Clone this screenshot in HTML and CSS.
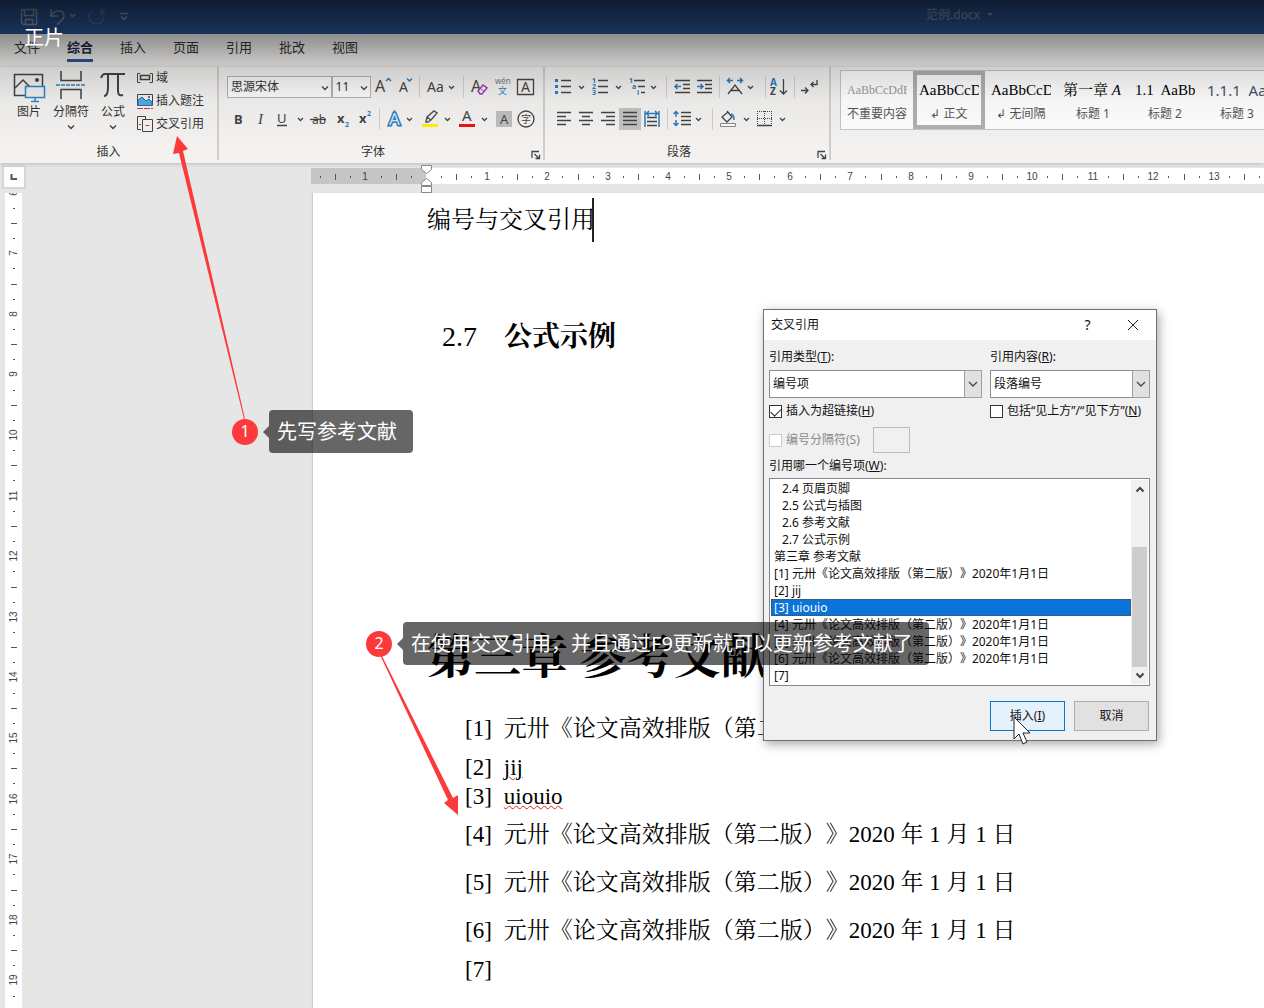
FILE: index.html
```
<!DOCTYPE html>
<html lang="zh-CN">
<head>
    <meta charset="UTF-8">
    <meta name="viewport" content="width=device-width, initial-scale=1.0">
    <title>范例.docx</title>
    <link rel="stylesheet" href="styles.css">
</head>
<body>
    <!-- 标题栏 -->
    <header class="titlebar">
        <div class="quick-access">
            <button type="button" aria-label="保存">
                <svg width="18" height="18" fill="none" stroke="currentColor" stroke-width="1.500"><path d="M1.500 1.500h15v15h-13l-2-2zM4.500 1.500v6h9v-6M5.500 16.500v-5h7v5"/></svg>
            </button>
            <button type="button" aria-label="撤销">
                <svg width="28" height="18" fill="none" stroke="currentColor" stroke-width="1.500"><path d="M2 1v7h7M2.500 7.500C6 1 15 2 15 8c0 3-4 6-7 8.500"/><path d="M21 6l2.500 2.500L26 6"/></svg>
            </button>
            <button type="button" aria-label="重复">
                <svg class="faint" width="20" height="18" fill="none" stroke="currentColor" stroke-width="1.500"><path d="M4 2.500a7.500 7.500 0 1 0 9 0M13 7V2h5"/></svg>
            </button>
            <button type="button" aria-label="自定义快速访问工具栏">
                <svg width="10" height="18" fill="none" stroke="currentColor" stroke-width="1.500"><path d="M1 5.500h8M2 8.500l3 3 3-3"/></svg>
            </button>
        </div>
        <button type="button" class="doc-title">范例.docx
            <svg width="8" height="6"><path d="M1 1h6L4 4z" fill="currentColor"/></svg>
        </button>
    </header>

    <!-- 选项卡 -->
    <nav class="tabs">
        <a href="#">文件</a>
        <a href="#" class="active">综合</a>
        <a href="#">插入</a>
        <a href="#">页面</a>
        <a href="#">引用</a>
        <a href="#">批改</a>
        <a href="#">视图</a>
    </nav>

    <!-- 功能区 -->
    <section class="ribbon">
        <div class="group insert-group">
            <div class="group-body">
                <button type="button" class="big-btn">
                    <svg width="34" height="32" fill="none" stroke="#444"><path d="M21 24.500H2.500v-21h28V15M3 17l8-8 10 10" stroke-width="1.500"/><circle cx="25" cy="9" r="2" fill="#444" stroke="none"/><path d="M13.500 15.500h19v11h-19zM23 27v3M19 30.500h8" fill="#f3f2f1" stroke="#2b88c8" stroke-width="1.500"/></svg>
                    图片
                </button>
                <button type="button" class="big-btn">
                    <svg width="30" height="32" fill="none" stroke="#444" stroke-width="1.500"><path d="M5 0v9.500h20V0M5 28V18.500h20V28"/><path d="M0 14h30" stroke="#2b88c8" stroke-dasharray="4 1"/></svg>
                    分隔符
                    <svg width="8" height="6" fill="none" stroke="#444" stroke-width="1.500"><path d="M1 1.500l3 3 3-3"/></svg>
                </button>
                <button type="button" class="big-btn">
                    <svg width="26" height="32" fill="none" stroke="#444" stroke-width="2"><path d="M1 7c1-3 2-4 4-4h20M8 3v13c0 5-1 9-4 9M18 3v17c0 4 2 5 5 4"/></svg>
                    公式
                    <svg width="8" height="6" fill="none" stroke="#444" stroke-width="1.500"><path d="M1 1.500l3 3 3-3"/></svg>
                </button>
                <div class="small-list">
                    <button type="button">
                        <svg width="17" height="18" fill="none" stroke="#444"><path d="M3 4.500H.5v9h3M13 4.500h2.500v9h-3"/><path d="M3.500 6.500h9v4h-9z" stroke-width="1.500"/></svg>域
                    </button>
                    <button type="button">
                        <svg width="17" height="18" fill="none" stroke="#444"><path d="M.5 2.500h15v11H.5z"/><path d="M1 8l4-3 4 4 3-2 3 3v3.500H1z" fill="#5aa9e0" stroke="#1f6fb5"/><circle cx="12" cy="5" r="1" fill="#444" stroke="none"/><path d="M0 16.500h16" stroke="#d13438" stroke-dasharray="6 1"/></svg>插入题注
                    </button>
                    <button type="button">
                        <svg width="17" height="18" fill="none" stroke="#444"><path d="M4 14.500H.5V1.500h8V4M5.500 4.500h10v12h-10z"/><path d="M2 9.500h2M8.500 10.500h4" stroke="#d13438"/></svg>交叉引用
                    </button>
                </div>
            </div>
            <div class="group-label">插入</div>
        </div>

        <div class="group font-group">
            <div class="group-body rows">
                <div class="row">
                    <span class="picker font-name">
                        <select aria-label="字体"><option>思源宋体</option></select>
                        <svg width="8" height="6" class="line"><path d="M1 1.500l3 3 3-3"/></svg>
                    </span>
                    <span class="picker font-size">
                        <select aria-label="字号"><option>11</option></select>
                        <svg width="8" height="6" class="line"><path d="M1 1.500l3 3 3-3"/></svg>
                    </span>
                    <button type="button" aria-label="增大字号"><svg width="22" height="22"><text x="4" y="16" font-size="16">A</text><path d="M15 5l2.500-2.500L20 5" fill="none" stroke="#2b7cc0" stroke-width="1.500"/></svg></button>
                    <button type="button" aria-label="减小字号"><svg width="22" height="22"><text x="6" y="16" font-size="14">A</text><path d="M14 2.500L16.500 5 19 2.500" fill="none" stroke="#2b7cc0" stroke-width="1.500"/></svg></button>
                    <span class="sep"></span>
                    <button type="button" aria-label="更改大小写"><svg width="35" height="22"><text x="3" y="16" font-size="14">Aa</text><path d="M25 10l2.500 2.500L30 10" class="line"/></svg></button>
                    <span class="sep"></span>
                    <button type="button" aria-label="清除格式"><svg width="23" height="22"><text x="3" y="16" font-size="16">A</text><path d="M10 15l5-6 4 3-5 6h-2z" fill="#f3f2f1" stroke="#9b3fb5" stroke-width="1.500"/><path d="M12 12l4 3.500" stroke="#9b3fb5"/></svg></button>
                    <button type="button" aria-label="拼音指南"><svg width="23" height="22"><text x="4" y="8" font-size="8" class="soft">wén</text><text x="7" y="18" font-size="9" class="blue">文</text></svg></button>
                    <button type="button" aria-label="字符边框"><svg width="22" height="22"><path d="M3.500 3.500h16v15h-16z" class="line"/><text x="7" y="16" font-size="14">A</text></svg></button>
                </div>
                <div class="row">
                    <button type="button" aria-label="加粗"><svg width="22" height="22"><text x="7" y="16" font-size="13" font-weight="bold">B</text></svg></button>
                    <button type="button" aria-label="倾斜"><svg width="22" height="22"><text x="9" y="16" font-size="15" class="serif" font-style="italic">I</text></svg></button>
                    <button type="button" aria-label="下划线"><svg width="38" height="22"><text x="6" y="15" font-size="13">U</text><path d="M6 17.500h10M27 10l2.500 2.500L32 10" class="line"/></svg></button>
                    <button type="button" aria-label="删除线"><svg width="23" height="22"><text x="3" y="16" font-size="12">ab</text><path d="M1 11.500h16" class="line"/></svg></button>
                    <button type="button" aria-label="下标"><svg width="22" height="22"><text x="5" y="15" font-size="13" font-weight="bold">x</text><text x="13" y="19" font-size="7" font-weight="bold" class="blue">2</text></svg></button>
                    <button type="button" aria-label="上标"><svg width="21" height="22"><text x="5" y="15" font-size="13" font-weight="bold">x</text><text x="13" y="8" font-size="7" font-weight="bold" class="blue">2</text></svg></button>
                    <span class="sep"></span>
                    <button type="button" aria-label="文本效果"><svg width="34" height="22"><text x="5" y="17" font-size="17" class="outlined">A</text><path d="M23 10l2.500 2.500L28 10" class="line"/></svg></button>
                    <button type="button" aria-label="突出显示"><svg width="38" height="22"><path d="M4 16h16v3H4z" fill="#fff100"/><path d="M8 14l1-5 7-6 3 2-6 7-3 2zM9 9l4 3" fill="none" stroke="#555" stroke-width="1.500"/><path d="M27 10l2.500 2.500L32 10" class="line"/></svg></button>
                    <button type="button" aria-label="字体颜色"><svg width="36" height="22"><text x="6" y="13" font-size="15">A</text><path d="M3 16h16v3H3z" fill="#e81410"/><path d="M26 10l2.500 2.500L31 10" class="line"/></svg></button>
                    <button type="button" aria-label="字符底纹"><svg width="22" height="22"><path d="M4 3h16v16H4z" fill="#bfbebd"/><text x="8" y="16" font-size="13">A</text></svg></button>
                    <button type="button" aria-label="带圈字符"><svg width="22" height="22"><circle cx="12" cy="11" r="8" class="line"/><text x="7" y="15" font-size="10">字</text></svg></button>
                </div>
            </div>
            <div class="group-label shifted">字体
                <svg class="launcher" width="10" height="10"><path d="M1 8V1.500h7M3.500 4l4 4M8.500 4.500v4h-4" class="line"/></svg>
            </div>
        </div>

        <div class="group para-group">
            <div class="group-body rows">
                <div class="row">
                    <button type="button" aria-label="项目符号"><svg width="35" height="22"><path d="M2 3h3v3H2zM2 9h3v3H2zM2 15h3v3H2z" fill="#2b7cc0"/><path d="M8 4.500h10M8 10.500h10M8 16.500h10M26 10l2.500 2.500L31 10" class="line"/></svg></button>
                    <button type="button" aria-label="编号"><svg width="37" height="22"><text x="4" y="7" font-size="7" font-weight="bold" class="blue">1</text><text x="4" y="13" font-size="7" font-weight="bold" class="blue">2</text><text x="4" y="19" font-size="7" font-weight="bold" class="blue">3</text><path d="M10 4.500h10M10 10.500h10M10 16.500h10M28 10l2.500 2.500L33 10" class="line"/></svg></button>
                    <button type="button" aria-label="多级列表"><svg width="37" height="22"><text x="4" y="7" font-size="7" font-weight="bold" class="blue">1</text><text x="7" y="13" font-size="7" font-weight="bold" class="blue">a</text><text x="12" y="19" font-size="7" font-weight="bold" class="blue">i</text><path d="M9 4.500h11M13 10.500h7M16 16.500h4M26 10l2.500 2.500L31 10" class="line"/></svg></button>
                    <span class="sep"></span>
                    <button type="button" aria-label="减少缩进量"><svg width="22" height="22"><path d="M5 4.500h15M13 8.500h7M13 12.500h7M5 16.500h15" class="line"/><path d="M11 10.500H5M7.500 8L5 10.500 7.500 13" class="line blue-line"/></svg></button>
                    <button type="button" aria-label="增加缩进量"><svg width="22" height="22"><path d="M5 4.500h15M13 8.500h7M13 12.500h7M5 16.500h15" class="line"/><path d="M5 10.500h6M8.500 8l2.500 2.500L8.500 13" class="line blue-line"/></svg></button>
                    <span class="sep wide"></span>
                    <button type="button" aria-label="中文版式"><svg width="36" height="22"><path d="M3 18l7-9 7 9M6 14.500h8" class="line"/><path d="M8 4.500H3M5 2L2.500 4.500 5 7M12 4.500h5M15 2l2.500 2.500L15 7" class="line blue-line"/><path d="M23 10l2.500 2.500L28 10" class="line"/></svg></button>
                    <span class="sep"></span>
                    <button type="button" aria-label="排序"><svg width="21" height="22"><text x="1" y="10" font-size="10" font-weight="bold" class="blue">A</text><text x="1" y="19" font-size="10" font-weight="bold">Z</text><path d="M14.500 3v15M11 14.500l3.500 3.500 3.500-3.500" class="line"/></svg></button>
                    <span class="sep"></span>
                    <button type="button" aria-label="显示编辑标记"><svg width="24" height="22"><path d="M3 14.500h7M7 11.500l3 3-3 3M19 4v4.500h-6M15.500 6L13 8.500l2.500 2.500" class="line"/></svg></button>
                </div>
                <div class="row">
                    <button type="button" aria-label="左对齐"><svg width="22" height="22"><path d="M4 4.500h14M4 8.500h9M4 12.500h14M4 16.500h9" class="line"/></svg></button>
                    <button type="button" aria-label="居中"><svg width="22" height="22"><path d="M4 4.500h14M7 8.500h8M4 12.500h14M7 16.500h8" class="line"/></svg></button>
                    <button type="button" aria-label="右对齐"><svg width="22" height="22"><path d="M4 4.500h14M9 8.500h9M4 12.500h14M9 16.500h9" class="line"/></svg></button>
                    <button type="button" class="pressed" aria-label="两端对齐"><svg width="22" height="22"><path d="M4 4.500h14M4 8.500h14M4 12.500h14M4 16.500h14" class="line"/></svg></button>
                    <button type="button" aria-label="分散对齐"><svg width="22" height="22"><path d="M6 9.500h10M6 13.500h10M6 17.500h10" class="line"/><path d="M4 3v16M18 3v16M6 5.500h10M8 3L5.500 5.500 8 8M14 3l2.500 2.500L14 8" class="line blue-line"/></svg></button>
                    <span class="sep"></span>
                    <button type="button" aria-label="行距"><svg width="36" height="22"><path d="M9 4.500h10M9 8.500h10M9 12.500h10M9 16.500h10M24 10l2.500 2.500L29 10" class="line"/><path d="M4 4v5M1.500 6L4 3.500 6.500 6M4 12v5M1.500 15L4 17.500 6.500 15" class="line blue-line"/></svg></button>
                    <span class="sep"></span>
                    <button type="button" aria-label="底纹"><svg width="36" height="22"><path d="M3.500 15.500h15v3h-15z" fill="#fff" stroke="#888"/><path d="M10 3l5 6-5 5-5-5 6-5" class="line"/><path d="M14 6c2 0 3 2 3 6" class="line blue-line"/><path d="M27 10l2.500 2.500L32 10" class="line"/></svg></button>
                    <button type="button" aria-label="边框"><svg width="37" height="22"><path d="M4.500 3v14M18.500 3v14M11.500 3v14M4 3.500h15M4 10.500h15" class="line dots"/><path d="M4 17.500h15M27 10l2.500 2.500L32 10" class="line"/></svg></button>
                </div>
            </div>
            <div class="group-label shifted">段落
                <svg class="launcher" width="10" height="10"><path d="M1 8V1.500h7M3.500 4l4 4M8.500 4.500v4h-4" class="line"/></svg>
            </div>
        </div>

        <!-- 样式库 -->
        <div class="gallery">
            <button type="button"><span class="preview muted">AaBbCcDdEe</span><span>不重要内容</span></button>
            <button type="button" class="current"><span class="preview">AaBbCcDd</span><span>↲ 正文</span></button>
            <button type="button"><span class="preview">AaBbCcDd</span><span>↲ 无间隔</span></button>
            <button type="button"><span class="preview">第一章 <i>A</i></span><span>标题 1</span></button>
            <button type="button"><span class="preview">1.1&nbsp; AaBb</span><span>标题 2</span></button>
            <button type="button"><span class="preview sans">1.1.1&nbsp; AaBb</span><span>标题 3</span></button>
        </div>
    </section>

    <!-- 标尺 -->
    <div class="ruler-row">
        <div class="ruler-corner"><svg width="8" height="8"><path d="M1.500 1v5H7" fill="none" stroke="#555" stroke-width="2"/></svg></div>
        <div class="h-ruler">
            <svg id="hRuler" width="100%" height="16"></svg>
            <svg class="indent" width="14" height="28" fill="#fff" stroke="#888"><path d="M2.500.5h10v4l-5 4-5-4zM7.500 13.500l5 4v3h-10v-3zM2.500 21.500h10v6h-10z"/></svg>
        </div>
    </div>

    <main class="workspace">
        <svg id="vRuler" class="v-ruler" width="17"></svg>
        <article class="page">
            <p class="doc-line">编号与交叉引用<span class="text-cursor"></span></p>
            <h2><span class="num">2.7</span>公式示例</h2>
            <h1>第三章 参考文献</h1>
            <ol class="refs">
                <li><span>[1]</span>元卅《论文高效排版（第二版）》2020 年 1 月 1 日</li>
                <li class="latin"><span>[2]</span><u>jij</u></li>
                <li class="latin"><span>[3]</span><u>uiouio</u></li>
                <li><span>[4]</span>元卅《论文高效排版（第二版）》2020 年 1 月 1 日</li>
                <li><span>[5]</span>元卅《论文高效排版（第二版）》2020 年 1 月 1 日</li>
                <li><span>[6]</span>元卅《论文高效排版（第二版）》2020 年 1 月 1 日</li>
                <li class="latin"><span>[7]</span></li>
            </ol>
        </article>
    </main>

    <!-- 交叉引用对话框 -->
    <form class="dialog" role="dialog" aria-labelledby="dialogTitle">
        <div class="dialog-head">
            <span id="dialogTitle">交叉引用</span>
            <button type="button" aria-label="帮助">?</button>
            <button type="button" aria-label="关闭"><svg width="12" height="12"><path d="M1 1l10 10M11 1L1 11" fill="none" stroke="#222"/></svg></button>
        </div>
        <div class="dialog-body">
            <div class="columns">
                <div class="field">
                    <label for="refType">引用类型(<u>T</u>):</label>
                    <span class="combo">
                        <select id="refType"><option>编号项</option></select>
                        <span class="arrow"><svg width="10" height="6"><path d="M1 1l4 4 4-4" class="line"/></svg></span>
                    </span>
                    <label class="check"><input type="checkbox" checked><span>插入为超链接(<u>H</u>)</span></label>
                </div>
                <div class="field">
                    <label for="refContent">引用内容(<u>R</u>):</label>
                    <span class="combo">
                        <select id="refContent"><option>段落编号</option></select>
                        <span class="arrow"><svg width="10" height="6"><path d="M1 1l4 4 4-4" class="line"/></svg></span>
                    </span>
                    <label class="check"><input type="checkbox"><span>包括“见上方”/“见下方”(<u>N</u>)</span></label>
                </div>
            </div>
            <div class="separator-row">
                <label class="check disabled"><input type="checkbox" disabled><span>编号分隔符(S)</span></label>
                <input type="text" class="sep-input" aria-label="分隔符" disabled>
            </div>
            <div class="list-label" id="listLabel">引用哪一个编号项(<u>W</u>):</div>
            <div class="listbox">
                <ul role="listbox" aria-labelledby="listLabel" tabindex="0">
                    <li role="option" class="sub">2.4 页眉页脚</li>
                    <li role="option" class="sub">2.5 公式与插图</li>
                    <li role="option" class="sub">2.6 参考文献</li>
                    <li role="option" class="sub">2.7 公式示例</li>
                    <li role="option">第三章 参考文献</li>
                    <li role="option">[1] 元卅《论文高效排版（第二版）》2020年1月1日</li>
                    <li role="option">[2] jij</li>
                    <li role="option" class="selected" aria-selected="true">[3] uiouio</li>
                    <li role="option">[4] 元卅《论文高效排版（第二版）》2020年1月1日</li>
                    <li role="option">[5] 元卅《论文高效排版（第二版）》2020年1月1日</li>
                    <li role="option">[6] 元卅《论文高效排版（第二版）》2020年1月1日</li>
                    <li role="option">[7]</li>
                </ul>
                <div class="scrollbar">
                    <svg width="10" height="7"><path d="M1.500 5.500L5 2l3.500 3.500" fill="none" stroke="#444" stroke-width="2"/></svg>
                    <div class="thumb"></div>
                    <svg width="10" height="7"><path d="M1.500 1.500L5 5l3.500-3.500" fill="none" stroke="#444" stroke-width="2"/></svg>
                </div>
            </div>
            <div class="actions">
                <button type="button" class="primary">插入(<u>I</u>)</button>
                <button type="button">取消</button>
            </div>
        </div>
        <svg class="mouse" width="18" height="30"><path d="M1 1v22l5-5 4 10 4-2-4-9h7z" fill="#fff" stroke="#222"/></svg>
    </form>

    <!-- 顶部渐变阴影和批注 -->
    <div class="top-shade"></div>
    <div class="clip-name">正片</div>
    <svg class="arrows" fill="#fc3a3a">
        <path d="M177 136l11 13-5 2 62 268h-1L179 153l-6 1z"/>
        <path d="M382 656l71 142 5-3v20l-14-12 4-3-67-143z"/>
    </svg>
    <div class="note note-one"><b>1</b><span>先写参考文献</span></div>
    <div class="note note-two"><b>2</b><span>在使用交叉引用，并且通过F9更新就可以更新参考文献了</span></div>

    <script>
        // 一厘米对应的像素
        const CM = 60.6;

        function tick(kind, pos, vertical, label) {
            const p = Math.round(pos);
            if (kind === 0) {
                return vertical
                    ? `<text x="0" y="0" text-anchor="middle" transform="translate(12 ${p}) rotate(-90)">${label}</text>`
                    : `<text x="${p}" y="12" text-anchor="middle">${label}</text>`;
            }
            const len = kind === 2 ? 6 : 2;
            return vertical
                ? `<rect x="${9 - len / 2}" y="${p}" width="${len}" height="1"/>`
                : `<rect x="${p}" y="${9 - len / 2}" width="1" height="${len}"/>`;
        }

        function drawRuler(id, zero, from, to, vertical) {
            let out = '';
            for (let i = from; i <= to; i++) {
                if (i === 0) continue;
                out += tick(((i % 4) + 4) % 4, zero + i * CM / 4, vertical, Math.abs(i / 4));
            }
            document.getElementById(id).innerHTML += out;
        }

        document.getElementById('hRuler').innerHTML = '<rect class="margin-part" width="115" height="16"/>';
        drawRuler('hRuler', 115, -7, 160, false);
        drawRuler('vRuler', -364, 24, 120, true);
    </script>
</body>
</html>
```

FILE: styles.css
```
/* 基础样式 */
* {
    box-sizing: border-box;
}

body {
    margin: 0;
    height: 100vh;
    display: flex;
    flex-direction: column;
    position: relative;
    overflow: hidden;
    background-color: #e6e6e6;
    color: #333;
    font-family: "Noto Sans", "Noto Sans CJK SC", sans-serif;
    font-size: 12px;
    line-height: 16px;
    text-spacing-trim: space-all;
}

button,
select,
input {
    font: inherit;
    color: inherit;
}

button {
    padding: 0;
    border: none;
    background: none;
}

svg {
    display: block;
    flex: none;
}

svg text {
    fill: #444;
}

svg .serif {
    font-family: "Liberation Serif", serif;
}

svg .blue {
    fill: #2b7cc0;
}

svg .soft {
    fill: #777;
}

.line {
    fill: none;
    stroke: #444;
    stroke-width: 1.3;
}

svg .blue-line {
    stroke: #2b7cc0;
    stroke-width: 1.5;
}

svg .dots {
    stroke-width: 1;
    stroke-dasharray: 1 1;
}

svg .outlined {
    fill: #d5e8f8;
    stroke: #2b7cc0;
    stroke-width: 3px;
    paint-order: stroke;
}

/* 标题栏 */
.titlebar {
    display: flex;
    align-items: center;
    justify-content: space-between;
    flex: none;
    height: 34px;
    padding: 0 270px 4px 20px;
    background-color: #2b579a;
    color: #93a3be;
}

.quick-access {
    display: flex;
    gap: 11px;
    padding-top: 4px;
}

.quick-access .faint {
    opacity: 0.4;
}

.doc-title {
    display: flex;
    align-items: center;
    gap: 6px;
}

/* 选项卡 */
.tabs {
    display: flex;
    gap: 27px;
    flex: none;
    height: 33px;
    padding: 2px 14px 5px;
    background-color: #f3f2f1;
    font-size: 13px;
    line-height: 23px;
}

.tabs a {
    color: #333;
    text-decoration: none;
    border-bottom: 3px solid transparent;
}

.tabs .active {
    color: #1d2b45;
    font-weight: bold;
    border-bottom-color: #2b579a;
}

/* 功能区 */
.ribbon {
    display: flex;
    flex: none;
    height: 96px;
    background-color: #f3f2f1;
    box-shadow: 0 1px 4px #bbb;
    position: relative;
}

.group {
    display: flex;
    flex-direction: column;
    flex: none;
    height: 93px;
    border-right: 2px solid #d2d0ce;
}

.group-body {
    display: flex;
    flex: 1;
}

.group-label {
    position: relative;
    padding-right: 8px;
    text-align: center;
}

.group-label.shifted {
    padding-right: 16px;
}

.launcher {
    position: absolute;
    right: 2px;
    bottom: 0;
}

.insert-group {
    padding-left: 8px;
    width: 219px;
}

.big-btn {
    display: flex;
    flex-direction: column;
    align-items: center;
    gap: 1px;
    width: 42px;
    padding-top: 4px;
    white-space: nowrap;
}

.big-btn svg:last-child:not(:first-child) {
    margin-top: 3px;
}

.small-list {
    display: flex;
    flex-direction: column;
    gap: 1px;
    padding-left: 3px;
}

.small-list button {
    display: flex;
    align-items: center;
    gap: 2px;
    height: 22px;
}

.rows {
    flex-direction: column;
    gap: 10px;
    padding: 9px 7px 0 8px;
}

.row {
    display: flex;
    height: 22px;
}

.row .pressed {
    background-color: #c5c3c1;
}

.font-group {
    width: 326px;
}

.para-group {
    width: 286px;
}

.sep {
    width: 1px;
    margin: 0 4px;
    background-color: #d2d0ce;
}

.sep.wide {
    margin: 0 5px;
}

.picker {
    position: relative;
    display: flex;
}

.picker select {
    width: 100%;
    padding: 0 3px;
    border: 1px solid #b5b3b1;
    border-radius: 0;
    background-color: #fbfbfb;
    appearance: none;
}

.picker svg {
    position: absolute;
    right: 3px;
    top: 9px;
}

.font-name {
    width: 106px;
}

.font-size {
    width: 40px;
}

/* 样式库 */
.gallery {
    display: flex;
    flex: 1 0 auto;
    height: 60px;
    margin: 3px 0 0 9px;
    border: 1px solid #c8c6c4;
    background-color: #fff;
}

.gallery button {
    display: flex;
    flex-direction: column;
    align-items: center;
    gap: 6px;
    width: 72px;
    padding: 5px 2px 0;
    border: 4px solid transparent;
    color: #555;
    white-space: nowrap;
}

.gallery .current {
    border-color: #b1b1b1;
}

.preview {
    width: 60px;
    overflow: hidden;
    color: #000;
    font-family: "Liberation Serif", "Noto Serif CJK SC", "Noto Sans CJK SC", serif;
    font-size: 15px;
    line-height: 20px;
    text-align: left;
}

.preview.muted {
    color: #999;
    font-size: 12px;
}

.preview.sans {
    color: #44546a;
    font-family: "Noto Sans", sans-serif;
}

/* 标尺 */
.ruler-row {
    display: flex;
    justify-content: space-between;
    flex: none;
    height: 30px;
    padding-left: 2px;
}

.ruler-corner {
    display: flex;
    align-items: center;
    justify-content: center;
    width: 24px;
    height: 24px;
    margin-top: 2px;
    border: 2px solid #d6d6d6;
    background-color: #fdfdfd;
}

.h-ruler {
    position: relative;
    flex: 1;
    min-width: 0;
    height: 16px;
    margin: 5px 0 0 285px;
    background-color: #fff;
}

.h-ruler text,
.v-ruler text {
    font-family: "Liberation Sans", sans-serif;
    font-size: 10px;
}

.h-ruler rect,
.v-ruler rect {
    fill: #555;
}

.h-ruler .margin-part {
    fill: #c6c6c6;
}

.indent {
    position: absolute;
    left: 108px;
    top: -3px;
}

.workspace {
    display: flex;
    gap: 291px;
    flex: 1;
    min-height: 0;
    padding-left: 5px;
}

.v-ruler {
    height: 100%;
    background-color: #fff;
}

/* 文档 */
.page {
    flex: 1;
    min-width: 0;
    padding: 3px 0 0 114px;
    background-color: #fff;
    box-shadow: -1px 0 1px #ccc;
    color: #000;
    font-family: "Liberation Serif", "Noto Serif CJK SC", "Noto Sans CJK SC", serif;
    white-space: nowrap;
}

.doc-line {
    display: flex;
    align-items: center;
    margin: 0;
    font-size: 24px;
    line-height: 48px;
}

.text-cursor {
    width: 2px;
    height: 44px;
    margin-left: -3px;
    background-color: #222;
}

.page h2 {
    display: flex;
    gap: 27px;
    margin: 69px 0 0 15px;
    font-size: 28px;
    line-height: 48px;
}

.page .num {
    font-weight: normal;
}

.page h1 {
    margin: 266px 0 0;
    font-size: 47px;
    line-height: 60px;
}

.refs {
    margin: 18px 0 0 38px;
    padding: 0;
    list-style: none;
    font-size: 23px;
    line-height: 48px;
}

.refs li {
    display: flex;
    gap: 12px;
}

.refs .latin {
    line-height: 29px;
    min-height: 29px;
}

.refs u {
    text-decoration: underline wavy #d22 1px;
}

/* 对话框 */
.dialog {
    position: absolute;
    left: 763px;
    top: 309px;
    width: 394px;
    border: 1px solid #707070;
    background-color: #f0f0f0;
    box-shadow: 2px 3px 10px rgba(0, 0, 0, 0.35);
    color: #111;
}

.dialog-head {
    display: flex;
    align-items: center;
    height: 30px;
    padding: 0 1px 0 7px;
    background-color: #fff;
}

.dialog-head span {
    flex: 1;
}

.dialog-head button {
    display: flex;
    align-items: center;
    justify-content: center;
    width: 45px;
    height: 30px;
    font-size: 14px;
}

.dialog-body {
    padding: 8px 6px 9px 5px;
}

.columns {
    display: grid;
    grid-template-columns: 213px 160px;
    gap: 8px;
}

.field {
    display: flex;
    flex-direction: column;
    gap: 4px;
    line-height: 18px;
}

.combo {
    display: flex;
    position: relative;
    height: 28px;
}

.combo select {
    width: 100%;
    padding: 0 3px;
    border: 1px solid #8b8e92;
    border-radius: 0;
    background-color: #fff;
    appearance: none;
}

.arrow {
    position: absolute;
    top: 0;
    right: 0;
    display: flex;
    align-items: center;
    justify-content: center;
    width: 18px;
    height: 28px;
    border: 1px solid #9aa0a6;
    background-color: #e1e1e1;
    pointer-events: none;
}

.check {
    display: flex;
    align-items: center;
    gap: 4px;
    white-space: nowrap;
}

.check input {
    width: 13px;
    height: 13px;
    margin: 0;
    border: 1px solid #333;
    background-color: #fff;
    appearance: none;
}

.check input:checked::before {
    content: "";
    display: block;
    width: 9px;
    height: 5px;
    margin: 2px 0 0 1px;
    border-left: 1px solid #222;
    border-bottom: 1px solid #222;
    transform: rotate(-45deg);
}

.check.disabled {
    color: #8a8a8a;
}

.check.disabled input {
    border-color: #ccc;
}

.separator-row {
    display: flex;
    gap: 13px;
    height: 26px;
    margin-top: 7px;
}

.sep-input {
    width: 37px;
    border: 1px solid #bbb;
    background-color: #f0f0f0;
}

.list-label {
    margin: 5px 0 4px;
}

.listbox {
    display: flex;
    justify-content: space-between;
    height: 208px;
    padding: 1px;
    border: 1px solid #828790;
    background-color: #fff;
}

.listbox ul {
    flex: 1;
    margin: 0;
    padding: 0;
    list-style: none;
    line-height: 17px;
}

.listbox li {
    height: 17px;
    padding: 0 3px;
    white-space: nowrap;
}

.listbox .sub {
    padding-left: 11px;
}

.listbox .selected {
    background-color: #0a74da;
    color: #fff;
    outline: 1px dotted #5a4a20;
    outline-offset: -1px;
}

.scrollbar {
    display: flex;
    flex-direction: column;
    align-items: center;
    width: 17px;
    padding: 6px 0 5px;
    background-color: #f0f0f0;
}

.thumb {
    width: 15px;
    height: 120px;
    margin: auto 0 5px;
    background-color: #cdcdcd;
}

.actions {
    display: flex;
    justify-content: flex-end;
    gap: 9px;
    margin-top: 15px;
    padding-right: 1px;
}

.actions button {
    width: 75px;
    height: 30px;
    border: 1px solid #adadad;
    background-color: #e1e1e1;
}

.actions .primary {
    border-color: #0078d7;
    background-color: #e5f1fb;
}

.mouse {
    position: absolute;
    left: 249px;
    top: 406px;
}

/* 顶部阴影和批注 */
.top-shade {
    position: absolute;
    top: 0;
    left: 0;
    right: 0;
    height: 150px;
    background: linear-gradient(rgba(0, 0, 0, 0.68), rgba(0, 0, 0, 0.42) 34px, rgba(0, 0, 0, 0.15) 67px, rgba(0, 0, 0, 0.04) 100px, transparent);
    pointer-events: none;
}

.clip-name {
    position: absolute;
    left: 24px;
    top: 26px;
    color: #fff;
    font-size: 20px;
    line-height: 24px;
}

.arrows {
    position: absolute;
    top: 0;
    left: 0;
    width: 100%;
    height: 100%;
    pointer-events: none;
}

.note {
    position: absolute;
    display: flex;
    align-items: center;
    gap: 11px;
    color: #fff;
    white-space: nowrap;
}

.note-one {
    left: 232px;
    top: 410px;
}

.note-two {
    left: 366px;
    top: 622px;
}

.note b {
    width: 26px;
    height: 26px;
    border-radius: 50%;
    background-color: #fc3a3a;
    font-size: 16px;
    font-weight: normal;
    line-height: 25px;
    text-align: center;
}

.note span {
    position: relative;
    padding: 0 16px 0 8px;
    border-radius: 4px;
    background-color: rgba(0, 0, 0, 0.6);
    font-size: 20px;
    line-height: 43px;
}

.note span::before {
    content: "";
    position: absolute;
    left: -6px;
    top: 16px;
    border: 6px solid transparent;
    border-left: none;
    border-right-color: rgba(0, 0, 0, 0.6);
}
```
